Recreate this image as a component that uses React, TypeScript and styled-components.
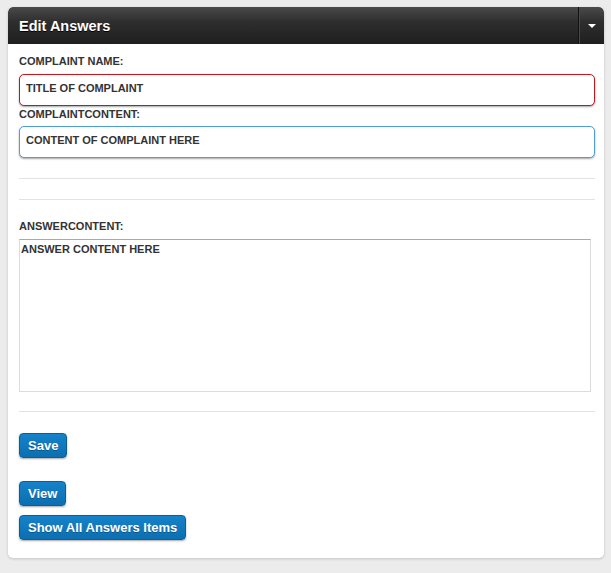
import styled, { createGlobalStyle } from 'styled-components';

const GlobalStyle = createGlobalStyle`
  html, body {
    margin: 0;
    padding: 0;
    background: #ececec;
  }
  body {
    font-family: "Liberation Sans", Arial, sans-serif;
    color: #333;
  }
`;

const Page = styled.div`
  padding: 7px 7px 14px 8px;
`;

const Card = styled.div`
  width: 596px;
  background: #fff;
  border-radius: 5px;
  box-shadow: 0 1px 3px rgba(0, 0, 0, 0.18);
  overflow: hidden;
`;

const Header = styled.div`
  display: flex;
  align-items: stretch;
  height: 37px;
  background: linear-gradient(#4a4a4a, #2e2e2e 40%, #1f1f1f);
  border-radius: 5px 5px 0 0;
`;

const Title = styled.h2`
  flex: 1;
  margin: 0;
  padding-left: 11px;
  display: flex;
  align-items: center;
  font-size: 14.5px;
  font-weight: bold;
  color: #fff;
  text-shadow: 0 1px 0 #000;
`;

const Toggle = styled.div`
  width: 25px;
  border-left: 1px solid #111;
  box-shadow: inset 1px 0 0 #4a4a4a;
  display: flex;
  align-items: center;
  justify-content: center;
`;

const Caret = styled.span`
  width: 0;
  height: 0;
  border-left: 4px solid transparent;
  border-right: 4px solid transparent;
  border-top: 4px solid #fff;
`;

const Body = styled.div`
  padding: 9px 9px 18px 11px;
  display: flex;
  flex-direction: column;
`;

const Label = styled.label<{ $gap?: number }>`
  display: block;
  font-size: 11px;
  line-height: 16px;
  font-weight: bold;
  color: #333;
  margin-bottom: ${({ $gap }) => $gap ?? 5}px;
`;

const Field = styled.div<{ $tone: 'error' | 'focus' }>`
  height: 32px;
  box-sizing: border-box;
  padding: 5px 6px;
  border: 1px solid ${({ $tone }) => ($tone === 'error' ? '#c4161c' : '#4d9fd6')};
  border-radius: 5px;
  box-shadow: 0 1px 2px rgba(0, 0, 0, 0.35);
  font-size: 11px;
  line-height: 16px;
  font-weight: bold;
  color: #333;
  background: #fff;
`;

const Rule = styled.hr<{ $top: number; $bottom: number }>`
  width: 100%;
  margin: ${({ $top }) => $top}px 0 ${({ $bottom }) => $bottom}px;
  border: 0;
  border-top: 1px solid #e3e3e3;
`;

const TextArea = styled.div`
  width: 572px;
  height: 153px;
  box-sizing: border-box;
  padding: 2px 1px;
  border: 1px solid #dcdcdc;
  border-top-color: #a9a9a9;
  font-size: 11px;
  line-height: 14px;
  font-weight: bold;
  color: #333;
`;

const Button = styled.button<{ $mt: number }>`
  align-self: flex-start;
  margin-top: ${({ $mt }) => $mt}px;
  height: 25px;
  padding: 0 8px;
  border: 1px solid #0a5f99;
  border-radius: 4px;
  background: linear-gradient(#1682c9, #0b6fb1);
  box-shadow: 0 1px 2px rgba(0, 0, 0, 0.35);
  font-family: "Liberation Sans", Arial, sans-serif;
  font-size: 13px;
  font-weight: bold;
  color: #fff;
  text-shadow: 0 1px 0 rgba(0, 0, 0, 0.3);
  cursor: pointer;
`;

export default function App() {
  return (
    <>
      <GlobalStyle />
      <Page>
        <Card>
          <Header>
            <Title>Edit Answers</Title>
            <Toggle>
              <Caret />
            </Toggle>
          </Header>
          <Body>
            <Label>COMPLAINT NAME:</Label>
            <Field $tone="error">TITLE OF COMPLAINT</Field>
            <Label $gap={4}>COMPLAINTCONTENT:</Label>
            <Field $tone="focus">CONTENT OF COMPLAINT HERE</Field>
            <Rule $top={20} $bottom={20} />
            <Rule $top={0} $bottom={18} />
            <Label>ANSWERCONTENT:</Label>
            <TextArea>ANSWER CONTENT HERE</TextArea>
            <Rule $top={19} $bottom={0} />
            <Button $mt={21}>Save</Button>
            <Button $mt={23}>View</Button>
            <Button $mt={9}>Show All Answers Items</Button>
          </Body>
        </Card>
      </Page>
    </>
  );
}
